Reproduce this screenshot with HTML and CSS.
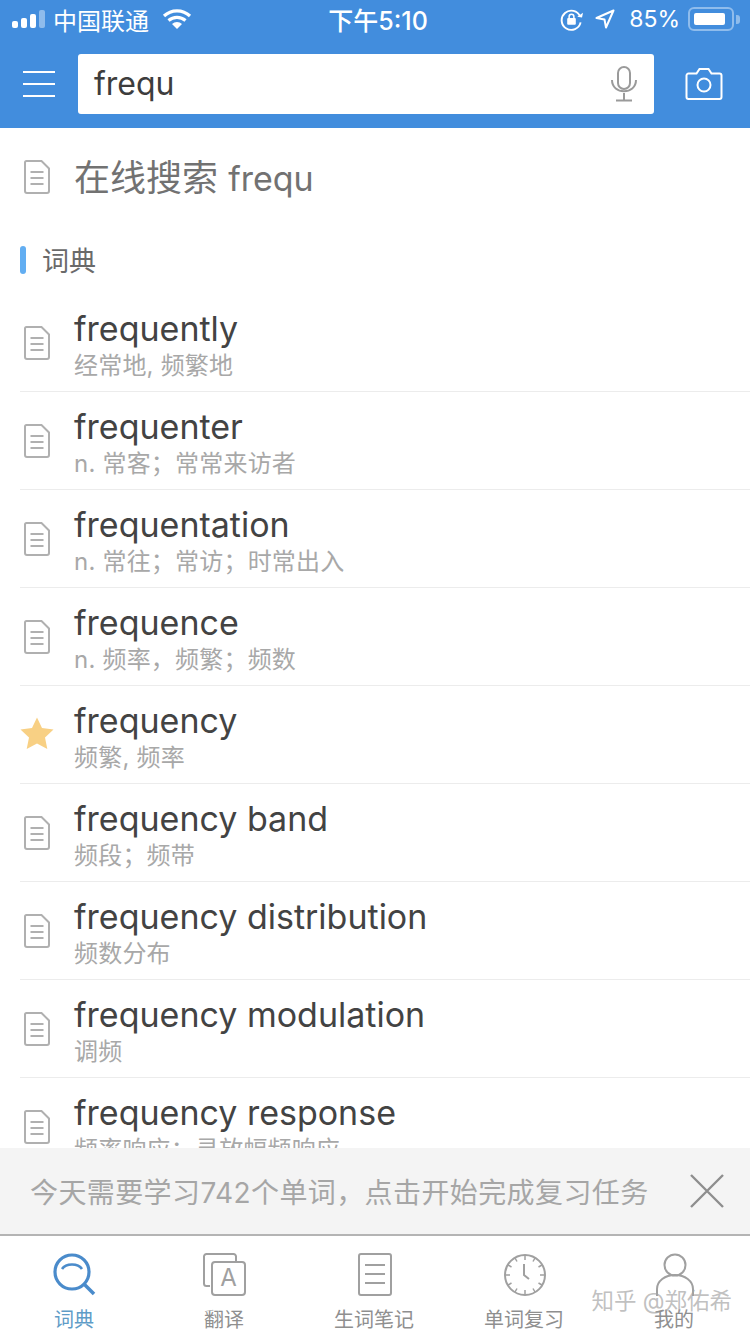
FILE: index.html

```html
<!DOCTYPE html>
<html lang="zh-CN">
<head>
  <meta charset="UTF-8">
  <title>词典</title>
  <link rel="stylesheet" href="styles.css">
</head>
<body>
  <svg class="defs" width="0" height="0">
    <symbol id="doc" viewBox="0 0 26 34">
      <path d="M2.500 1h15L25 8.500V31a2 2 0 0 1-2 2H3a2 2 0 0 1-2-2V2.500A1.500 1.500 0 0 1 2.500 1z" fill="none" stroke="#b0b0b0" stroke-width="2"/>
      <path d="M6.500 12h13M6.500 18h13M6.500 24h13" stroke="#b0b0b0" stroke-width="2"/>
    </symbol>
  </svg>

  <div class="page">
    <div class="top">
      <div class="status">
        <div class="status-left">
          <svg class="signal" width="33" height="20" viewBox="0 0 33 20">
            <rect x="0" y="12" width="6" height="7" rx="2" fill="#fff"/>
            <rect x="9" y="9" width="6" height="10" rx="2" fill="#fff"/>
            <rect x="18" y="5" width="6" height="14" rx="2" fill="#fff"/>
            <rect x="27" y="1" width="6" height="18" rx="2" fill="#8fbcec"/>
          </svg>
          <span class="carrier">中国联通</span>
          <svg class="wifi" width="30" height="22" viewBox="0 0 30 22">
            <path d="M2 8a19 19 0 0 1 26 0M6.500 12.500a13 13 0 0 1 17 0" fill="none" stroke="#fff" stroke-width="3.200"/>
            <path d="M10 16a7.500 7.500 0 0 1 10 0l-5 5z" fill="#fff"/>
          </svg>
        </div>
        <div class="time">下午5:10</div>
        <div class="status-right">
          <svg width="23" height="23" viewBox="0 0 24 24">
            <path d="M21 9A10 10 0 1 0 21.500 15" fill="none" stroke="#fff" stroke-width="2"/>
            <path d="M18 9l5 1 1-5z" fill="#fff"/>
            <rect x="7.500" y="10.500" width="9" height="7" rx="1" fill="#fff"/>
            <path d="M9.500 11V9a2.500 2.500 0 0 1 5 0v2" fill="none" stroke="#fff" stroke-width="1.600"/>
          </svg>
          <svg class="arrow" width="20" height="20" viewBox="0 0 20 20">
            <path d="M18.500 1.500L1.500 9l8 1.500 1.500 8z" fill="none" stroke="#fff" stroke-width="2" stroke-linejoin="round"/>
          </svg>
          <span class="battery-num">85%</span>
          <div class="battery"><div class="battery-fill"></div></div>
          <div class="battery-tip"></div>
        </div>
      </div>
      <div class="toolbar">
        <div class="menu"><span></span><span></span><span></span></div>
        <div class="search">
          <span class="search-text">frequ</span>
          <svg width="28" height="36" viewBox="0 0 28 36">
            <rect x="8" y="1" width="12" height="22" rx="6" fill="none" stroke="#9a9a9a" stroke-width="2"/>
            <path d="M2 14c0 15 24 15 24 0M14 27v7M6 34.500h16" fill="none" stroke="#9a9a9a" stroke-width="2"/>
          </svg>
        </div>
        <svg class="camera" width="38" height="34" viewBox="0 0 38 34">
          <path d="M3.500 6.500h8l3-4.500h9l3 4.500h8a2 2 0 0 1 2 2V30a2 2 0 0 1-2 2h-31a2 2 0 0 1-2-2V8.500a2 2 0 0 1 2-2z" fill="none" stroke="#fff" stroke-width="2"/>
          <circle cx="19" cy="18" r="6.500" fill="none" stroke="#fff" stroke-width="2"/>
        </svg>
      </div>
    </div>

    <div class="content">
      <div class="online">
        <svg class="doc-icon" width="26" height="34"><use href="#doc"/></svg>
        <span class="online-text">在线搜索 <em>frequ</em></span>
      </div>
      <div class="section"><i></i>词典</div>

      <div class="row">
        <svg class="doc-icon" width="26" height="34"><use href="#doc"/></svg>
        <div class="row-body"><div class="word">frequently</div><div class="sub">经常地, 频繁地</div></div>
      </div>
      <div class="row">
        <svg class="doc-icon" width="26" height="34"><use href="#doc"/></svg>
        <div class="row-body"><div class="word">frequenter</div><div class="sub">n. 常客；常常来访者</div></div>
      </div>
      <div class="row">
        <svg class="doc-icon" width="26" height="34"><use href="#doc"/></svg>
        <div class="row-body"><div class="word">frequentation</div><div class="sub">n. 常往；常访；时常出入</div></div>
      </div>
      <div class="row">
        <svg class="doc-icon" width="26" height="34"><use href="#doc"/></svg>
        <div class="row-body"><div class="word">frequence</div><div class="sub">n. 频率，频繁；频数</div></div>
      </div>
      <div class="row">
        <svg class="star-icon" width="34" height="32" viewBox="0 0 34 32">
          <path d="M17 0.500l5 10.500 11.500 1.500-8.500 8 2.300 11.500L17 26.500 6.700 32 9 20.500l-8.500-8L12 11z" fill="#f8d084"/>
        </svg>
        <div class="row-body"><div class="word">frequency</div><div class="sub">频繁, 频率</div></div>
      </div>
      <div class="row">
        <svg class="doc-icon" width="26" height="34"><use href="#doc"/></svg>
        <div class="row-body"><div class="word">frequency band</div><div class="sub">频段；频带</div></div>
      </div>
      <div class="row">
        <svg class="doc-icon" width="26" height="34"><use href="#doc"/></svg>
        <div class="row-body"><div class="word">frequency distribution</div><div class="sub">频数分布</div></div>
      </div>
      <div class="row">
        <svg class="doc-icon" width="26" height="34"><use href="#doc"/></svg>
        <div class="row-body"><div class="word">frequency modulation</div><div class="sub">调频</div></div>
      </div>
      <div class="row">
        <svg class="doc-icon" width="26" height="34"><use href="#doc"/></svg>
        <div class="row-body"><div class="word">frequency response</div><div class="sub">频率响应；寻放幅频响应</div></div>
      </div>
    </div>

    <div class="notice">
      <span class="notice-text">今天需要学习742个单词，点击开始完成复习任务</span>
      <svg width="36" height="36" viewBox="0 0 36 36">
        <path d="M2 2l32 32M34 2L2 34" stroke="#8e8e8e" stroke-width="2.400"/>
      </svg>
    </div>

    <div class="tabs">
      <div class="tab active">
        <svg width="44" height="44" viewBox="0 0 44 44">
          <circle cx="19" cy="19" r="17" fill="none" stroke="#4a8bcb" stroke-width="3.200"/>
          <path d="M9 16c4-6 16-6 20 0" fill="none" stroke="#4a8bcb" stroke-width="2.600"/>
          <path d="M31 31l10 10" stroke="#4a8bcb" stroke-width="3.600"/>
        </svg>
        <span>词典</span>
      </div>
      <div class="tab">
        <svg width="44" height="44" viewBox="0 0 44 44">
          <path d="M7 33H3.500A2.500 2.500 0 0 1 1 30.500V3.500A2.500 2.500 0 0 1 3.500 1h27A2.500 2.500 0 0 1 33 3.500V8" fill="none" stroke="#a0a0a0" stroke-width="2"/>
          <rect x="9" y="9" width="33" height="33" rx="3" fill="#fff" stroke="#a0a0a0" stroke-width="2"/>
          <text x="25.500" y="33" class="tab-letter">A</text>
        </svg>
        <span>翻译</span>
      </div>
      <div class="tab">
        <svg width="34" height="44" viewBox="0 0 34 44">
          <rect x="1" y="1" width="32" height="41" rx="2" fill="none" stroke="#a0a0a0" stroke-width="2"/>
          <path d="M7 12h20M7 21h20M7 30h20" stroke="#a0a0a0" stroke-width="2"/>
        </svg>
        <span>生词笔记</span>
      </div>
      <div class="tab">
        <svg width="44" height="44" viewBox="0 0 44 44">
          <circle cx="22" cy="22" r="20" fill="none" stroke="#a0a0a0" stroke-width="2"/>
          <path d="M22 2v5M22 37v5M2 22h5M37 22h5M12 5l2 3.500M32 5l-2 3.500M5 12l3.500 2M39 12l-3.500 2M5 32l3.500-2M39 32l-3.500-2M12 39l2-3.500M32 39l-2-3.500" stroke="#a0a0a0" stroke-width="1.500"/>
          <path d="M21 11v11l5 4" fill="none" stroke="#a0a0a0" stroke-width="2"/>
        </svg>
        <span>单词复习</span>
      </div>
      <div class="tab">
        <svg width="38" height="44" viewBox="0 0 38 44">
          <circle cx="19" cy="12" r="10.500" fill="none" stroke="#a0a0a0" stroke-width="2"/>
          <path d="M1 43V36c0-8 8-14 18-14s18 6 18 14v7" fill="none" stroke="#a0a0a0" stroke-width="2"/>
        </svg>
        <span>我的</span>
      </div>
    </div>

    <div class="watermark">知乎 @郑佑希</div>
  </div>
</body>
</html>
```

FILE: styles.css

```css
* {
  box-sizing: border-box;
}

body {
  margin: 0;
  background-color: #fff;
  font-family: Inter, "Noto Sans CJK SC", sans-serif;
}

.defs {
  position: absolute;
}

.page {
  position: relative;
  display: flex;
  flex-direction: column;
  width: 750px;
  height: 1334px;
  overflow: hidden;
}

.top {
  height: 128px;
  flex: none;
  background-color: #428ddd;
  color: #fff;
}

.status {
  display: grid;
  grid-template-columns: 1fr auto 1fr;
  align-items: center;
  height: 40px;
  padding: 0 10px 2px 12px;
}

.status-left,
.status-right {
  display: flex;
  align-items: center;
}

.status-right {
  justify-content: flex-end;
}

.carrier {
  margin-left: 8px;
  font-size: 24px;
}

.wifi {
  margin-left: 13px;
}

.time {
  margin-left: 4px;
  font-size: 25px;
  font-weight: 500;
}

.arrow {
  margin-left: 12px;
}

.battery-num {
  margin-left: 14px;
  font-size: 23px;
}

.battery {
  width: 46px;
  height: 24px;
  margin-left: 8px;
  padding: 4px;
  border: 2px solid #8fbcec;
  border-radius: 6px;
}

.battery-fill {
  width: 31px;
  height: 100%;
  background-color: #fff;
  border-radius: 2px;
}

.battery-tip {
  width: 4px;
  height: 9px;
  margin-left: 2px;
  background-color: #8fbcec;
  border-radius: 0 3px 3px 0;
}

.toolbar {
  display: flex;
  align-items: center;
  height: 88px;
  padding: 0 27px 0 23px;
}

.menu {
  display: flex;
  flex-direction: column;
  gap: 10px;
  width: 32px;
}

.menu span {
  height: 2px;
  background-color: #fff;
}

.search {
  display: flex;
  align-items: center;
  justify-content: space-between;
  width: 576px;
  height: 60px;
  margin-left: 23px;
  padding: 0 16px;
  background-color: #fff;
  border-radius: 3px;
}

.search-text {
  margin-bottom: 2px;
  color: #3d3d3d;
  font-size: 32px;
}

.camera {
  margin-left: 31px;
}

.content {
  flex: 1;
  min-height: 0;
  overflow: hidden;
}

.online {
  display: flex;
  align-items: center;
  height: 98px;
  padding-left: 20px;
}

.online-text {
  margin-bottom: 5px;
  margin-left: 24px;
  color: #727272;
  font-size: 36px;
}

.online-text em {
  font-size: 34px;
  font-style: normal;
}

.section {
  display: flex;
  align-items: center;
  height: 68px;
  padding-bottom: 1px;
  padding-left: 20px;
  color: #6a6a6a;
  font-size: 27px;
}

.section i {
  width: 6px;
  height: 28px;
  margin-right: 16px;
  background-color: #62aef2;
  border-radius: 3px;
}

.row {
  display: flex;
  align-items: center;
  height: 98px;
  margin-left: 20px;
  border-bottom: 1px solid #ececec;
}

.row:first-of-type {
  height: 97px;
}

.doc-icon {
  flex: none;
  margin-left: 4px;
}

.star-icon {
  flex: none;
  margin-bottom: 3px;
}

.row-body {
  margin-top: 4px;
  margin-left: 24px;
}

.star-icon + .row-body {
  margin-left: 20px;
}

.word {
  height: 43px;
  color: #434343;
  font-size: 34px;
  line-height: 44px;
}

.sub {
  height: 32px;
  color: #a8a8a8;
  font-size: 24px;
  letter-spacing: 0.2px;
  line-height: 32px;
}

.notice {
  display: flex;
  align-items: center;
  justify-content: space-between;
  flex: none;
  height: 88px;
  padding: 0 25px 0 30px;
  background-color: #f4f4f4;
  border-bottom: 2px solid #b4b4b4;
}

.notice-text {
  color: #a6a6a6;
  font-size: 28px;
  letter-spacing: 0.4px;
}

.tabs {
  display: grid;
  grid-template-columns: repeat(5, 150px);
  flex: none;
  height: 98px;
  background-color: #fff;
}

.tab {
  display: flex;
  flex-direction: column;
  align-items: center;
  padding-top: 17px;
  color: #8f8f8f;
  font-size: 20px;
  line-height: 28px;
}

.tab span {
  margin-top: 9px;
  margin-right: 2px;
}

.tab.active {
  color: #5f9cc7;
}

.tab-letter {
  fill: #a0a0a0;
  font-size: 24px;
  text-anchor: middle;
}

.watermark {
  position: absolute;
  right: 18px;
  bottom: 19px;
  color: rgba(165, 165, 165, 0.7);
  font-size: 22.500px;
}
```
